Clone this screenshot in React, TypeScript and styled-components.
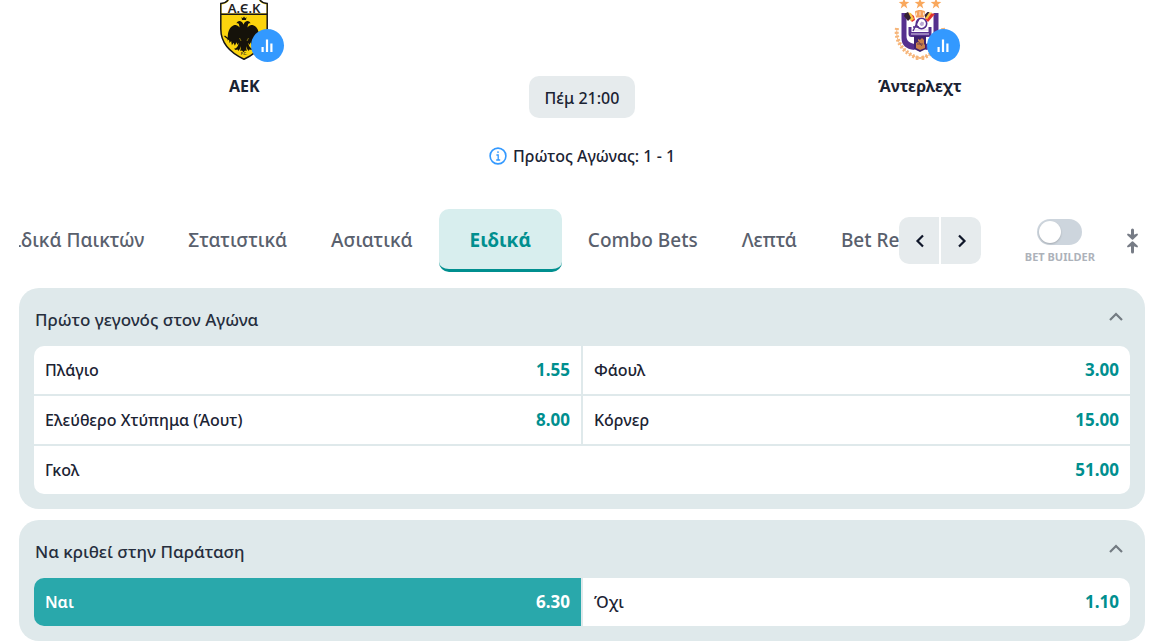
import React, { useLayoutEffect, useRef, useState } from 'react';
import styled, { createGlobalStyle, css } from 'styled-components';

const color = {
  ink: '#1b2333',
  heading: '#262e3d',
  muted: '#59606d',
  teal: '#008f8f',
  tealSoft: '#d8eeee',
  picked: '#29a8ab',
  panel: '#dfe9eb',
  grey: '#e6ebed',
  blue: '#3399ff',
};

const GlobalStyle = createGlobalStyle`
  *, *::before, *::after { box-sizing: border-box; }
  body {
    margin: 0;
    background: #fff;
    color: ${color.ink};
    font-family: 'Noto Sans', sans-serif;
    font-size: 16px;
    line-height: 24px;
  }
  button {
    font: inherit;
    color: inherit;
    border: 0;
    padding: 0;
    background: none;
    cursor: pointer;
  }
`;

const Page = styled.main`
  padding: 0 14px 0 19px;
`;

const MatchHeader = styled.header`
  display: grid;
  grid-template-columns: 2fr 1fr 2fr;
  height: 209px;
`;

const Team = styled.div`
  display: flex;
  flex-direction: column;
  align-items: center;
  gap: 14px;
`;

const Crest = styled.div`
  position: relative;
  width: 60px;
  height: 60px;

  > svg {
    display: block;
  }
`;

const StatsBadge = styled.button`
  position: absolute;
  right: -10px;
  bottom: -2px;
  display: grid;
  place-items: center;
  width: 33px;
  height: 33px;
  border-radius: 50%;
  background: ${color.blue};
`;

const TeamName = styled.h2`
  margin: 0;
  font-size: 16px;
  font-weight: 700;
`;

const Kickoff = styled.div`
  display: flex;
  flex-direction: column;
  align-items: center;
  gap: 26px;
  padding-top: 76px;
  font-weight: 500;
  white-space: nowrap;
`;

const KickoffTime = styled.time`
  padding: 10px 16px 8px;
  border-radius: 10px;
  background: ${color.grey};
`;

const FirstLeg = styled.p`
  display: flex;
  align-items: center;
  gap: 6px;
  margin: 0;
`;

const MarketBar = styled.div`
  display: flex;
  align-items: center;
  height: 63px;
`;

const TabStrip = styled.nav`
  display: flex;
  flex: 1;
  min-width: 0;
  overflow: hidden;
`;

const Tab = styled.button<{ $active: boolean }>`
  flex: none;
  height: 63px;
  padding: 0 22px 2px;
  color: ${color.muted};
  font-size: 19px;
  font-weight: 500;
  white-space: nowrap;

  ${({ $active }) =>
    $active &&
    css`
      margin: 0 4px;
      padding: 1px 31px 0;
      border-bottom: 3px solid ${color.teal};
      border-radius: 10px;
      background: ${color.tealSoft};
      color: ${color.teal};
      font-weight: 700;
    `}
`;

const Arrows = styled.div`
  display: flex;
  gap: 2px;
  border-radius: 10px;
  overflow: hidden;
`;

const ArrowButton = styled.button`
  display: grid;
  place-items: center;
  width: 40px;
  height: 47px;
  background: ${color.grey};
`;

const BuilderToggle = styled.label`
  display: flex;
  flex-direction: column;
  align-items: center;
  gap: 4px;
  margin-left: 44px;
  padding-top: 2px;
  color: #adb2ba;
  font-size: 11px;
  font-weight: 700;
  line-height: 16px;
  white-space: nowrap;
`;

const Switch = styled.input`
  appearance: none;
  width: 45px;
  height: 26px;
  margin: 0;
  padding: 2px;
  border-radius: 13px;
  background: #cdd5dd;
  cursor: pointer;

  &::before {
    content: '';
    display: block;
    width: 22px;
    height: 22px;
    border-radius: 50%;
    background: #fff;
    box-shadow: 0 1px 2px rgba(0, 0, 0, 0.2);
  }

  &:checked {
    background: ${color.teal};
  }

  &:checked::before {
    margin-left: auto;
  }
`;

const CollapseAll = styled.button`
  display: grid;
  place-items: center;
  width: 24px;
  height: 32px;
  margin-left: 26px;
`;

const Markets = styled.div`
  display: flex;
  flex-direction: column;
  gap: 11px;
  padding-top: 16px;
`;

const Panel = styled.section`
  padding: 0 15px 15px;
  border-radius: 20px;
  background: ${color.panel};
`;

const PanelToggle = styled.button`
  display: flex;
  align-items: center;
  justify-content: space-between;
  width: 100%;
  height: 58px;
  padding: 6px 7px 0 1px;
  color: ${color.heading};
  text-align: left;
`;

const PanelTitle = styled.h3`
  margin: 0;
  font-size: 17px;
  font-weight: 500;
`;

const Chevron = styled.svg`
  margin-bottom: 6px;
`;

const OutcomeGrid = styled.div`
  display: grid;
  grid-template-columns: 1fr 1fr;
  gap: 2px;
  border-radius: 10px;
  overflow: hidden;
`;

const Outcome = styled.button<{ $picked: boolean }>`
  display: flex;
  align-items: center;
  justify-content: space-between;
  height: 48px;
  padding: 0 11px;
  background: ${({ $picked }) => ($picked ? color.picked : '#fff')};
  color: ${({ $picked }) => ($picked ? '#fff' : color.ink)};
  font-weight: ${({ $picked }) => ($picked ? 600 : 500)};

  &:last-child:nth-child(odd) {
    grid-column: 1 / -1;
  }
`;

const Odds = styled.span<{ $picked: boolean }>`
  color: ${({ $picked }) => ($picked ? '#fff' : color.teal)};
  font-size: 17px;
  font-weight: 700;
`;

const BarsIcon = () => (
  <svg width="13" height="14" viewBox="0 0 13 14" fill="#fff" aria-hidden="true">
    <rect x="0.5" y="8" width="2.2" height="5" />
    <rect x="4.9" y="0.5" width="2.2" height="12.5" />
    <rect x="9.300" y="4.5" width="2.2" height="8.5" />
  </svg>
);

const InfoIcon = () => (
  <svg width="18" height="18" viewBox="0 0 18 18" fill="none" stroke={color.blue} aria-hidden="true">
    <circle cx="9" cy="9" r="7.9" strokeWidth="1.6" />
    <path d="M7.4 8h1.8v5M7.2 13h4" strokeWidth="1.3" />
    <circle cx="9" cy="5.1" r="0.9" fill={color.blue} stroke="none" />
  </svg>
);

const AekCrest = () => (
  <svg width="60" height="60" viewBox="0 0 60 60" role="img" aria-label="ΑΕΚ">
    <path
      d="M6.800 3.400C11 3.300 13.500 2.200 15-2h30c1.500 4.200 4 5.300 8.200 5.400V29c0 13-9 23.500-23.200 30.200C15.800 52.500 6.800 42 6.800 29Z"
      fill="#fbd40d"
      stroke="#161616"
      strokeWidth="1.500"
    />
    <path d="M7.800 4.400C12 4 14.500 2 15.800-1h28.400C45.500 2 48 4 52.200 4.400v8.800H7.800Z" fill="#fff" />
    <path d="M7 14.200h46" stroke="#161616" strokeWidth="1.500" />
    <g fill="#222" fontFamily="'Noto Sans', sans-serif" fontWeight="600" textAnchor="middle">
      <text x="30" y="12.500" fontSize="13">Α.Є.Κ</text>
      <text x="30" y="55" fontSize="4">F.C.</text>
    </g>
    <g fill="#15120a">
      <path d="m27.500 17 1.200 1.200L30 16.400l1.300 1.800 1.200-1.200-.5 3h-4Z" />
      <path d="M30 26.500c-.5-3-1.800-5-4-5.500-1.600-.2-2.600.6-3.600 2.200 1.500-.2 2.200.2 2.600 1.200l.6 3c-1.600-2.200-3.600-3-5.800-2.200-3.600 1.400-5.600 5-6 10.500l-.3 5 1.600-1.800.3 4.200 1.700-2 .8 4.200 1.600-2.600 1.400 3 1.500-3.400 1 2.600 1-2.200c.3 2-.6 4-2.600 5.600l-1.800.4 1.600 1.400 2-.6.6 1.400 1.500-1.700 1.400-3.200-.8 5 1.700-.6 1.500 1.800 1.500-1.800 1.700.6-.8-5 1.400 3.200 1.500 1.700.6-1.400 2 .6 1.600-1.400-1.800-.4c-2-1.600-2.900-3.600-2.600-5.600l1 2.200 1-2.600 1.500 3.400 1.400-3 1.600 2.600.8-4.200 1.700 2 .3-4.200 1.600 1.800-.3-5c-.4-5.500-2.400-9.100-6-10.500-2.200-.8-4.200 0-5.800 2.200l.6-3c.4-1 1.100-1.400 2.600-1.200-1-1.600-2-2.400-3.600-2.200-2.200.5-3.500 2.500-4 5.500Z" />
    </g>
    <path d="m10.500 36 6.500 5" stroke="#15120a" strokeWidth="1.300" />
    <path d="m25.500 38 1.500 3m7.500-3L33 41" stroke="#b39a10" strokeWidth="0.700" />
  </svg>
);

const star = 'm0-5.500 1.300 3.800 4 .1-3.200 2.500 1.200 4L0 2.500l-3.300 2.400 1.200-4-3.200-2.500 4-.1Z';

const AnderlechtCrest = () => (
  <svg width="60" height="60" viewBox="0 0 60 60" role="img" aria-label="Άντερλεχτ">
    <g fill="#f9a85d">
      <path d={star} transform="translate(14 3.500)" />
      <path d={star} transform="translate(30 3.500)" />
      <path d={star} transform="translate(46 3.500)" />
    </g>
    <g fill="none" stroke="#f6b579">
      <path d="M7 28c-2 13 6 25 21 30M53 28c2 13-6 25-21 30" strokeWidth="1" />
      <path d="M7 28c-2 13 6 25 21 30M53 28c2 13-6 25-21 30" strokeWidth="4" strokeDasharray="2 1.800" />
      <path d="m26 56 8 4m-8 0 8-4" strokeWidth="1.200" />
    </g>
    <path d="M11.500 13h5v23c0 5 3 7 8 8v6c-9-1-13-5-13-12Z" fill="#55308e" />
    <path d="M48.500 13h-5v23c0 5-3 7-8 8v6c9-1 13-5 13-12Z" fill="#55308e" />
    <path d="M18.500 27v7c0 2 1 3 3 3h17c2 0 3-1 3-3v-7h-3v5h-17v-5Z" fill="#55308e" />
    <path d="M21 34h18M22 30h16" stroke="#d9cfe8" strokeWidth="1" />
    <circle cx="31.500" cy="23.500" r="5.200" fill="#fff" stroke="#55308e" strokeWidth="1.600" />
    <path d="m23 31 6-12m-6 8h6" fill="none" stroke="#55308e" strokeWidth="1.400" />
    <path d="m29.500 24 2-2.500 2.500 1-.5 3-2.500.5Z" fill="#b9a8d3" />
    <path d="m20 13 4 3 1 4-3 2-4-5Z" fill="#e3352f" />
    <path d="m18 12.500 3 .5 3 6-3 2-4-5Z" fill="#f7c544" />
    <path d="m15 13.500 3-1.500 3 6-3 3-4-5Z" fill="#342032" />
    <path d="m45 14-7 8-3-3 5-6Z" fill="#e3352f" />
    <path d="m42 12.500-5 7-2-2 4-5Z" fill="#f7c544" />
    <path d="m39.500 12-4 6-1-3 3-3Z" fill="#342032" />
    <path d="M25 11.500c2-2 8-2 10 0l-1 6h-8Z" fill="#f6a15b" />
    <path d="M26.500 12.500v3m3.500-4v4m3.500-3v3" stroke="#fff" strokeWidth="0.700" />
    <path d="M24 36h12v13l-6 3-6-3Z" fill="#3d216e" />
    <path d="M26 48v-5l2-1v-3l2 1 2-2 2 2v4l1 1v3l-5 2Z" fill="#c9804a" />
    <path d="M27 44h6m-5-3 4 5" stroke="#5b3151" strokeWidth="0.800" />
  </svg>
);

const CollapseIcon = () => (
  <svg width="14" height="28" viewBox="0 0 14 28" fill="#777c86" stroke="#777c86" strokeLinecap="round" strokeLinejoin="round" aria-hidden="true">
    <path d="M6.500 3v7M6.500 25v-7" strokeWidth="3" />
    <path d="M2 7.500 6.500 9 11 7.500l-4.500 4.300ZM2 19.500 6.500 18l4.500 1.500-4.500-4.300Z" strokeWidth="1.800" />
  </svg>
);

const tabs = ['Ειδικά Παικτών', 'Στατιστικά', 'Ασιατικά', 'Ειδικά', 'Combo Bets', 'Λεπτά', 'Bet Request'];

const markets = [
  {
    title: 'Πρώτο γεγονός στον Αγώνα',
    outcomes: [
      ['Πλάγιο', '1.55'],
      ['Φάουλ', '3.00'],
      ['Ελεύθερο Χτύπημα (Άουτ)', '8.00'],
      ['Κόρνερ', '15.00'],
      ['Γκολ', '51.00'],
    ],
  },
  {
    title: 'Να κριθεί στην Παράταση',
    outcomes: [
      ['Ναι', '6.30'],
      ['Όχι', '1.10'],
    ],
  },
];

function Market({ title, outcomes, picked, onPick }: {
  title: string;
  outcomes: string[][];
  picked: string;
  onPick: (name: string) => void;
}) {
  const [open, setOpen] = useState(true);
  return (
    <Panel>
      <PanelToggle aria-expanded={open} onClick={() => setOpen(!open)}>
        <PanelTitle>{title}</PanelTitle>
        <Chevron width="14" height="10" viewBox="0 0 14 10" fill="none" stroke="#737b82" strokeWidth="2.200" aria-hidden="true">
          <path d={open ? 'm1 8 6-6 6 6' : 'm1 2 6 6 6-6'} />
        </Chevron>
      </PanelToggle>
      {open && (
        <OutcomeGrid>
          {outcomes.map(([name, odds]) => (
            <Outcome key={name} $picked={name === picked} aria-pressed={name === picked} onClick={() => onPick(name)}>
              <span>{name}</span>
              <Odds $picked={name === picked}>{odds}</Odds>
            </Outcome>
          ))}
        </OutcomeGrid>
      )}
    </Panel>
  );
}

export default function App() {
  const strip = useRef<HTMLElement>(null);
  const [active, setActive] = useState('Ειδικά');
  const [picked, setPicked] = useState('Ναι');

  useLayoutEffect(() => {
    if (strip.current) strip.current.scrollLeft = 37;
  }, []);

  const scroll = (by: number) => strip.current?.scrollBy({ left: by, behavior: 'smooth' });

  return (
    <Page>
      <GlobalStyle />
      <MatchHeader>
        <Team>
          <Crest>
            <AekCrest />
            <StatsBadge aria-label="Στατιστικά ΑΕΚ"><BarsIcon /></StatsBadge>
          </Crest>
          <TeamName>ΑΕΚ</TeamName>
        </Team>
        <Kickoff>
          <KickoffTime>Πέμ 21:00</KickoffTime>
          <FirstLeg><InfoIcon />Πρώτος Αγώνας: 1 - 1</FirstLeg>
        </Kickoff>
        <Team>
          <Crest>
            <AnderlechtCrest />
            <StatsBadge aria-label="Στατιστικά Άντερλεχτ"><BarsIcon /></StatsBadge>
          </Crest>
          <TeamName>Άντερλεχτ</TeamName>
        </Team>
      </MatchHeader>
      <MarketBar>
        <TabStrip ref={strip}>
          {tabs.map((tab) => (
            <Tab key={tab} $active={tab === active} onClick={() => setActive(tab)}>{tab}</Tab>
          ))}
        </TabStrip>
        <Arrows>
          <ArrowButton aria-label="Προηγούμενα" onClick={() => scroll(-200)}>
            <svg width="12" height="14" viewBox="0 0 12 14" fill="none" stroke="#10172a" strokeWidth="2.200">
              <path d="M10 1.500 4.500 7l5.500 5.500" />
            </svg>
          </ArrowButton>
          <ArrowButton aria-label="Επόμενα" onClick={() => scroll(200)}>
            <svg width="12" height="14" viewBox="0 0 12 14" fill="none" stroke="#10172a" strokeWidth="2.200">
              <path d="M4 1.500 9.500 7 4 12.500" />
            </svg>
          </ArrowButton>
        </Arrows>
        <BuilderToggle>
          <Switch type="checkbox" />
          BET BUILDER
        </BuilderToggle>
        <CollapseAll aria-label="Σύμπτυξη όλων"><CollapseIcon /></CollapseAll>
      </MarketBar>
      <Markets>
        {markets.map((market) => (
          <Market key={market.title} {...market} picked={picked} onPick={setPicked} />
        ))}
      </Markets>
    </Page>
  );
}
